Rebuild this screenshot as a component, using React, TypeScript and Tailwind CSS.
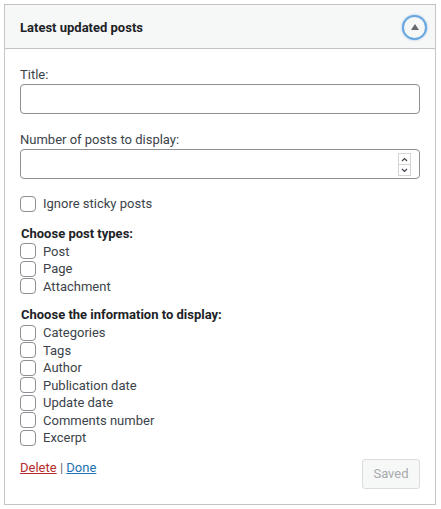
import React from "react";

const postTypes = ["Post", "Page", "Attachment"];
const infoFields = [
  "Categories",
  "Tags",
  "Author",
  "Publication date",
  "Update date",
  "Comments number",
  "Excerpt",
];

function Box() {
  return (
    <span className="inline-block h-4 w-4 shrink-0 rounded-[4px] border border-[#8c8f94] bg-white" />
  );
}

function CheckRow({ label }: { label: string }) {
  return (
    <label className="flex h-[17.5px] items-center gap-[7px]">
      <Box />
      <span>{label}</span>
    </label>
  );
}

export default function App() {
  return (
    <div
      className="min-h-[509px] bg-white pt-1 pl-1 text-[13px] text-[#3c434a]"
      style={{ fontFamily: "Roboto, 'Liberation Sans', sans-serif" }}
    >
      <div className="w-[432px] border border-[#c3c4c7] bg-white">
        {/* header */}
        <div className="flex h-[44px] items-center justify-between border-b border-[#c3c4c7] bg-[#f6f7f7] pt-[2px] pl-[15px] pr-[8px]">
          <h3 className="font-bold text-[#1d2327]">Latest updated posts</h3>
          <button
            type="button"
            className="flex h-[25px] w-[25px] items-center justify-center rounded-full border-2 border-[#6aa8e0] bg-[#f6f7f7] shadow-[0_0_2px_0_rgba(79,148,212,0.7)]"
          >
            <span className="mb-[1px] h-0 w-0 border-x-[4px] border-b-[6px] border-x-transparent border-b-[#646970]" />
          </button>
        </div>

        {/* body */}
        <div className="px-[15px] pt-[17px] pb-[15px]">
          <label className="block leading-[18px]">Title:</label>
          <input
            type="text"
            className="block h-[30px] w-full rounded-[4px] border border-[#8c8f94] bg-white px-2"
          />

          <label className="mt-[17px] block leading-[18px]">
            Number of posts to display:
          </label>
          <div className="relative">
            <input
              type="text"
              className="block h-[30px] w-full rounded-[4px] border border-[#8c8f94] bg-white px-2"
            />
            <div className="absolute top-[4px] right-[9px] flex h-[23px] w-[13px] flex-col border border-[#d4d4d4] bg-white">
              <span className="flex flex-1 items-center justify-center border-b border-[#d4d4d4]">
                <svg width="7" height="5" viewBox="0 0 7 5">
                  <path d="M1 4 L3.5 1.5 L6 4" fill="none" stroke="#3c434a" strokeWidth="1.2" />
                </svg>
              </span>
              <span className="flex flex-1 items-center justify-center">
                <svg width="7" height="5" viewBox="0 0 7 5">
                  <path d="M1 1 L3.5 3.5 L6 1" fill="none" stroke="#3c434a" strokeWidth="1.2" />
                </svg>
              </span>
            </div>
          </div>

          <div className="mt-[16px]">
            <CheckRow label="Ignore sticky posts" />
          </div>

          <div className="mt-[12px] pl-[1px] font-bold leading-[18px] text-[#1d2327]">
            Choose post types:
          </div>
          <div>
            {postTypes.map((t) => (
              <CheckRow key={t} label={t} />
            ))}
          </div>

          <div className="mt-[11px] pl-[1px] font-bold leading-[18px] text-[#1d2327]">
            Choose the information to display:
          </div>
          <div>
            {infoFields.map((t) => (
              <CheckRow key={t} label={t} />
            ))}
          </div>

          <div className="mt-[12px] flex items-start justify-between">
            <div className="leading-[18px]">
              <a href="#" className="text-[#b32d2e] underline">
                Delete
              </a>{" "}
              <span className="text-[#646970]">|</span>{" "}
              <a href="#" className="text-[#2271b1] underline">
                Done
              </a>
            </div>
            <button
              type="button"
              disabled
              className="h-[30px] w-[58px] rounded-[3px] border border-[#dcdcde] bg-[#f6f7f7] text-[#a7aaad]"
            >
              Saved
            </button>
          </div>
        </div>
      </div>
    </div>
  );
}
